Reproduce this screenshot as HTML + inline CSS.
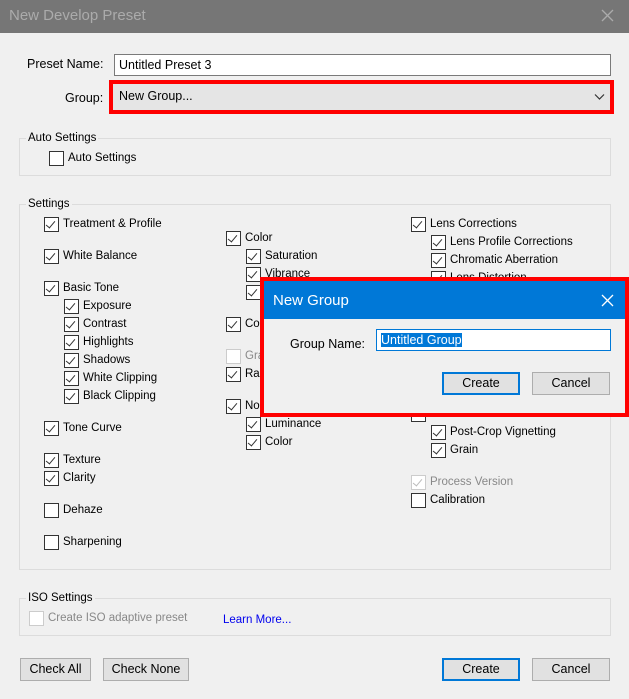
<!DOCTYPE html>
<html><head><meta charset="utf-8"><style>
*{box-sizing:border-box}
body{margin:0;width:629px;height:699px;background:#f0f0f0;font-family:"Liberation Sans",sans-serif;font-size:11.5px;color:#000;position:relative;overflow:hidden}
.a{position:absolute;white-space:nowrap}
.cb{position:absolute;width:15px;height:15px;border:1px solid #333;background:#fff}
.cb.c::after{content:"";position:absolute;left:3px;top:1px;width:4px;height:8px;border:solid #333;border-width:0 1.3px 1.3px 0;transform:rotate(40deg)}
.cb.d{border-color:#ccc}
.cb.d.c::after{border-color:#bbb}
.lb{position:absolute;line-height:15px;white-space:nowrap}
.g{color:#888}
.grp{position:absolute;border:1px solid #dcdcdc}
.gl{position:absolute;background:#f0f0f0;padding:0 2px;line-height:14px}
.btn{position:absolute;border:1px solid #adadad;background:#e1e1e1;text-align:center;font-size:12.5px}
.btn.p{border:2px solid #0078d7}
</style></head><body>
<div class="a" style="left:0;top:0;width:629px;height:33px;background:#767676"></div>
<div class="a" style="left:9px;top:7px;font-size:15px;color:#ababab">New Develop Preset</div>
<svg class="a" style="left:601px;top:9px" width="13" height="13"><path d="M1 1L12 12M12 1L1 12" stroke="#ababab" stroke-width="1.3"/></svg>

<div class="a" style="left:27px;top:57px;font-size:12.5px">Preset Name:</div>
<div class="a" style="left:114px;top:54px;width:497px;height:22px;border:1px solid #7a7a7a;background:#fff;padding:3px 4px;font-size:12.5px">Untitled Preset 3</div>
<div class="a" style="left:65px;top:91px;font-size:12.5px">Group:</div>
<div class="a" style="left:109px;top:80px;width:505px;height:34px;border:4px solid #f00;background:#e5e5e5;padding:5px 6px;font-size:12.5px">New Group...</div>
<svg class="a" style="left:594px;top:93px" width="11" height="8"><path d="M1 1.5L5.5 6L10 1.5" stroke="#333" fill="none" stroke-width="1.2"/></svg>

<div class="grp" style="left:19px;top:138px;width:592px;height:38px"></div>
<div class="gl" style="left:26px;top:131px">Auto Settings</div>
<div class="cb" style="left:49px;top:151px"></div><div class="lb" style="left:68px;top:151px">Auto Settings</div>

<div class="grp" style="left:19px;top:204px;width:592px;height:366px"></div>
<div class="gl" style="left:26px;top:197px">Settings</div>

<div class="cb c" style="left:44px;top:217px"></div><div class="lb" style="left:63px;top:217px">Treatment &amp; Profile</div>
<div class="cb c" style="left:44px;top:249px"></div><div class="lb" style="left:63px;top:249px">White Balance</div>
<div class="cb c" style="left:44px;top:281px"></div><div class="lb" style="left:63px;top:281px">Basic Tone</div>
<div class="cb c" style="left:64px;top:299px"></div><div class="lb" style="left:83px;top:299px">Exposure</div>
<div class="cb c" style="left:64px;top:317px"></div><div class="lb" style="left:83px;top:317px">Contrast</div>
<div class="cb c" style="left:64px;top:335px"></div><div class="lb" style="left:83px;top:335px">Highlights</div>
<div class="cb c" style="left:64px;top:353px"></div><div class="lb" style="left:83px;top:353px">Shadows</div>
<div class="cb c" style="left:64px;top:371px"></div><div class="lb" style="left:83px;top:371px">White Clipping</div>
<div class="cb c" style="left:64px;top:389px"></div><div class="lb" style="left:83px;top:389px">Black Clipping</div>
<div class="cb c" style="left:44px;top:421px"></div><div class="lb" style="left:63px;top:421px">Tone Curve</div>
<div class="cb c" style="left:44px;top:453px"></div><div class="lb" style="left:63px;top:453px">Texture</div>
<div class="cb c" style="left:44px;top:471px"></div><div class="lb" style="left:63px;top:471px">Clarity</div>
<div class="cb" style="left:44px;top:503px"></div><div class="lb" style="left:63px;top:503px">Dehaze</div>
<div class="cb" style="left:44px;top:535px"></div><div class="lb" style="left:63px;top:535px">Sharpening</div>

<div class="cb c" style="left:226px;top:231px"></div><div class="lb" style="left:245px;top:231px">Color</div>
<div class="cb c" style="left:246px;top:249px"></div><div class="lb" style="left:265px;top:249px">Saturation</div>
<div class="cb c" style="left:246px;top:267px"></div><div class="lb" style="left:265px;top:267px">Vibrance</div>
<div class="cb c" style="left:246px;top:285px"></div>
<div class="cb c" style="left:226px;top:317px"></div><div class="lb" style="left:245px;top:317px">Color</div>
<div class="cb d" style="left:226px;top:349px"></div><div class="lb g" style="left:245px;top:349px">Gra</div>
<div class="cb c" style="left:226px;top:367px"></div><div class="lb" style="left:245px;top:367px">Rad</div>
<div class="cb c" style="left:226px;top:399px"></div><div class="lb" style="left:245px;top:399px">Noise</div>
<div class="cb c" style="left:246px;top:417px"></div><div class="lb" style="left:265px;top:417px">Luminance</div>
<div class="cb c" style="left:246px;top:435px"></div><div class="lb" style="left:265px;top:435px">Color</div>

<div class="cb c" style="left:411px;top:217px"></div><div class="lb" style="left:430px;top:217px">Lens Corrections</div>
<div class="cb c" style="left:431px;top:235px"></div><div class="lb" style="left:450px;top:235px">Lens Profile Corrections</div>
<div class="cb c" style="left:431px;top:253px"></div><div class="lb" style="left:450px;top:253px">Chromatic Aberration</div>
<div class="cb c" style="left:431px;top:271px"></div><div class="lb" style="left:450px;top:271px">Lens Distortion</div>
<div class="cb" style="left:411px;top:407px"></div>
<div class="cb c" style="left:431px;top:425px"></div><div class="lb" style="left:450px;top:425px">Post-Crop Vignetting</div>
<div class="cb c" style="left:431px;top:443px"></div><div class="lb" style="left:450px;top:443px">Grain</div>
<div class="cb d c" style="left:411px;top:475px"></div><div class="lb g" style="left:430px;top:475px">Process Version</div>
<div class="cb" style="left:411px;top:493px"></div><div class="lb" style="left:430px;top:493px">Calibration</div>

<div class="grp" style="left:19px;top:598px;width:592px;height:38px"></div>
<div class="gl" style="left:26px;top:591px">ISO Settings</div>
<div class="cb d" style="left:29px;top:611px"></div><div class="lb g" style="left:48px;top:611px">Create ISO adaptive preset</div>
<div class="lb" style="left:223px;top:613px;color:#0000ee">Learn More...</div>

<div class="btn" style="left:20px;top:658px;width:71px;height:23px;line-height:21px">Check All</div>
<div class="btn" style="left:103px;top:658px;width:86px;height:23px;line-height:21px">Check None</div>
<div class="btn p" style="left:442px;top:658px;width:78px;height:23px;line-height:19px">Create</div>
<div class="btn" style="left:532px;top:658px;width:78px;height:23px;line-height:21px">Cancel</div>

<div class="a" style="left:260px;top:277px;width:369px;height:140px;border:4px solid #f00;background:#f0f0f0">
 <div class="a" style="left:0;top:0;width:361px;height:38px;background:#0078d7"></div>
 <div class="a" style="left:9px;top:11px;font-size:15px;color:#fff">New Group</div>
 <svg class="a" style="left:337px;top:13px" width="13" height="13"><path d="M1 1L12 12M12 1L1 12" stroke="#fff" stroke-width="1.3"/></svg>
 <div class="a" style="left:26px;top:56px;font-size:12.5px">Group Name:</div>
 <div class="a" style="left:112px;top:48px;width:235px;height:22px;border:1px solid #0078d7;background:#fff;padding:3px 4px;font-size:12.5px"><span style="background:#0078d7;color:#fff">Untitled Group</span></div>
 <div class="btn p" style="left:178px;top:91px;width:78px;height:23px;line-height:19px">Create</div>
 <div class="btn" style="left:268px;top:91px;width:78px;height:23px;line-height:21px">Cancel</div>
</div>
</body></html>
